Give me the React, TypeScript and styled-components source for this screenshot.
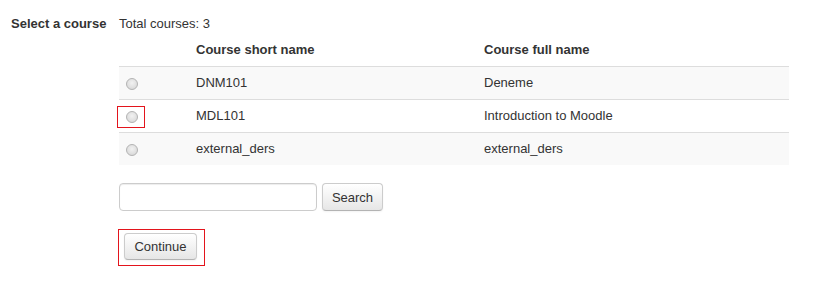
import React, { useState } from 'react';
import styled, { createGlobalStyle } from 'styled-components';

const GlobalStyle = createGlobalStyle`
    body {
        margin: 0;
        background: #fff;
        font-family: "Liberation Sans", Arial, sans-serif;
        font-size: 13px;
        color: #333;
    }
`;

const Page = styled.div`
    padding: 14px 0 0 11px;
`;

const FormRow = styled.div`
    display: grid;
    grid-template-columns: 108px 670px;
`;

const Label = styled.div`
    font-weight: bold;
    line-height: 20px;
`;

const Content = styled.div`
    display: flex;
    flex-direction: column;
    align-items: flex-start;
`;

const Total = styled.div`
    line-height: 20px;
`;

const Table = styled.table`
    width: 670px;
    border-collapse: collapse;
    border-spacing: 0;
    table-layout: fixed;
`;

const Th = styled.th<{ $w?: number }>`
    text-align: left;
    font-weight: bold;
    padding: 6px;
    line-height: 20px;
    width: ${p => (p.$w ? `${p.$w}px` : 'auto')};
`;

const Tr = styled.tr<{ $striped: boolean }>`
    background: ${p => (p.$striped ? '#f9f9f9' : '#fff')};
    border-top: 1px solid #ddd;
`;

const Td = styled.td`
    padding: 6px;
    line-height: 20px;
    vertical-align: middle;
`;

const RadioCell = styled(Td)`
    padding-left: 7px;
`;

const RadioWrap = styled.span<{ $marked: boolean }>`
    position: relative;
    display: inline-block;
    width: 12px;
    height: 12px;
    vertical-align: middle;

    &::after {
        content: '';
        display: ${p => (p.$marked ? 'block' : 'none')};
        position: absolute;
        top: -5px;
        bottom: -5px;
        left: -9px;
        right: -7px;
        border: 1px solid #e3141c;
    }
`;

const Radio = styled.input`
    appearance: none;
    margin: 0;
    width: 12px;
    height: 12px;
    border-radius: 50%;
    border: 1px solid #b4b4b4;
    background: radial-gradient(circle at 50% 40%, #f2f2f2 0%, #dcdcdc 70%, #cfcfcf 100%);
    display: block;
    cursor: pointer;

    &:checked {
        background: radial-gradient(circle, #444 0 2px, #e6e6e6 3px);
    }
`;

const SearchRow = styled.div`
    display: flex;
    gap: 5px;
    margin-top: 18px;
`;

const Input = styled.input`
    box-sizing: border-box;
    width: 198px;
    height: 28px;
    border: 1px solid #ccc;
    border-radius: 4px;
    padding: 4px 6px;
    font-family: inherit;
    font-size: 13px;
    box-shadow: inset 0 1px 1px rgba(0, 0, 0, 0.075);
    outline: none;
`;

const Button = styled.button<{ $w: number; $h?: number }>`
    box-sizing: border-box;
    width: ${p => p.$w}px;
    height: ${p => p.$h ?? 28}px;
    padding: 0;
    font-family: inherit;
    font-size: 13px;
    color: #333;
    background: linear-gradient(to bottom, #ffffff, #e6e6e6);
    border: 1px solid #cccccc;
    border-bottom-color: #b3b3b3;
    border-radius: 4px;
    box-shadow: inset 0 1px 0 rgba(255, 255, 255, 0.2), 0 1px 2px rgba(0, 0, 0, 0.05);
    cursor: pointer;
`;

const Highlight = styled.div`
    margin-top: 18px;
    margin-left: -1px;
    padding: 3px 7px 5px 5px;
    border: 1px solid #e3141c;
`;

const courses = [
    { short: 'DNM101', full: 'Deneme' },
    { short: 'MDL101', full: 'Introduction to Moodle' },
    { short: 'external_ders', full: 'external_ders' },
];

export default function App() {
    const [selected, setSelected] = useState<number | null>(null);

    return (
        <Page>
            <GlobalStyle />
            <FormRow>
                <Label>Select a course</Label>
                <Content>
                    <Total>Total courses: 3</Total>
                    <Table>
                        <thead>
                            <tr>
                                <Th $w={59}></Th>
                                <Th $w={276}>Course short name</Th>
                                <Th>Course full name</Th>
                            </tr>
                        </thead>
                        <tbody>
                            {courses.map((c, i) => (
                                <Tr key={c.short} $striped={i % 2 === 0}>
                                    <RadioCell>
                                        <RadioWrap $marked={i === 1}>
                                            <Radio
                                                type="radio"
                                                name="course"
                                                checked={selected === i}
                                                onChange={() => setSelected(i)}
                                            />
                                        </RadioWrap>
                                    </RadioCell>
                                    <Td>{c.short}</Td>
                                    <Td>{c.full}</Td>
                                </Tr>
                            ))}
                        </tbody>
                    </Table>
                    <SearchRow>
                        <Input type="text" />
                        <Button $w={61}>Search</Button>
                    </SearchRow>
                    <Highlight>
                        <Button $w={73} $h={27}>Continue</Button>
                    </Highlight>
                </Content>
            </FormRow>
        </Page>
    );
}
